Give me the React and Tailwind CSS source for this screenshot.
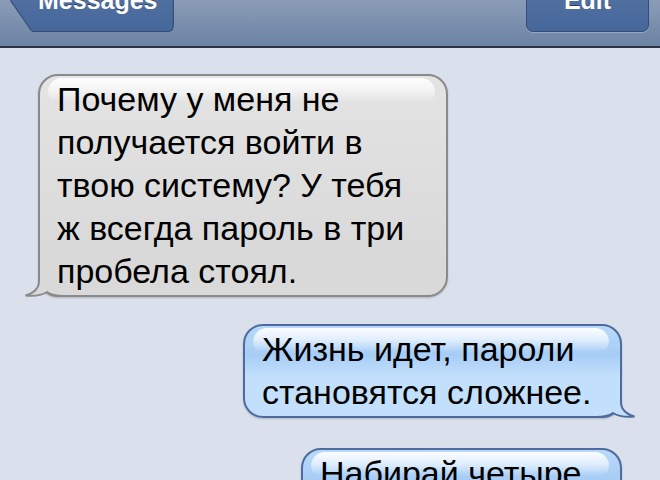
const FONT = "font-['Liberation_Sans',Arial,sans-serif]"

const TAIL_EDGE = 'M15,4 L15,22 C15,30 10,34 1.5,36.5 C10,37.5 18,36 23,33 C27,36 32,37 40,37'

// отступы считаются от внутреннего края рамки (2px), поэтому -16/-4
function Tail({ fill, stroke, right }) {
  return (
    <svg
      viewBox="0 0 40 40"
      className={
        right
          ? 'absolute right-[-16px] bottom-[-4px] w-[40px] h-[40px] -scale-x-100'
          : 'absolute left-[-16px] bottom-[-4px] w-[40px] h-[40px]'
      }
    >
      <path d={`${TAIL_EDGE} L40,4 Z`} fill={fill} />
      <path d={TAIL_EDGE} fill="none" stroke={stroke} strokeWidth="2" />
    </svg>
  )
}

function Bubble({ mine, className, children }) {
  // нижние 40px фона ровного цвета, чтобы хвостик сливался с пузырём
  const skin = mine
    ? 'border-[#4d6c9d] bg-[linear-gradient(#b9d9f9,#a7cdf6_32%,#c2dffb_calc(100%_-_40px))]'
    : 'border-[#8a8a8a] bg-[linear-gradient(#e4e4e4,#d9d9d9_calc(100%_-_40px))]'
  return (
    <div
      className={`relative rounded-[20px] border-2 pt-[2px] pb-[2px] pl-[17px] shadow-[0_1px_2px_rgba(0,0,0,0.2)] ${skin} ${className}`}
    >
      <div className="absolute top-[2px] left-[8px] right-[11px] h-[24px] rounded-t-[17px] rounded-b-[12px] bg-linear-to-b from-white/95 via-white/60 to-white/0" />
      {mine ? (
        <Tail fill="#c2dffb" stroke="#4d6c9d" right />
      ) : (
        <Tail fill="#d9d9d9" stroke="#8a8a8a" />
      )}
      <p className="relative text-[34px] leading-[43px] text-black whitespace-nowrap">{children}</p>
    </div>
  )
}

function BackButton() {
  return (
    <div className="relative w-[164px] h-[62px] -mt-[30px] ml-[10px] flex items-center pl-[28px]">
      <svg viewBox="0 0 164 62" className="absolute inset-0 w-[164px] h-[62px]">
        <defs>
          <linearGradient id="back" x1="0" y1="0" x2="0" y2="1">
            <stop offset="0" stopColor="#5877a7" />
            <stop offset="1" stopColor="#46679a" />
          </linearGradient>
        </defs>
        <path
          d="M0.8,31 L21,60 Q22,61.5 24,61.5 L157,61.5 Q163.3,61.5 163.3,55 L163.3,7 Q163.3,0.5 157,0.5 L24,0.5 Q22,0.5 21,2 Z"
          fill="url(#back)"
          stroke="#334d76"
          strokeWidth="1.2"
        />
      </svg>
      <span className="relative text-[25px] font-bold text-white [text-shadow:0_-1px_0_rgba(0,0,0,0.45)]">
        Messages
      </span>
    </div>
  )
}

export default function App() {
  return (
    <div className={`w-[660px] h-[480px] overflow-hidden bg-[#dbe1ec] ${FONT}`}>
      {/* навбар */}
      <div className="h-[48px] flex justify-between items-start overflow-hidden bg-linear-to-b from-[#8b9cb7] to-[#6c83a4] border-b-2 border-[#2a3445]">
        <BackButton />
        <div className="w-[123px] h-[62px] -mt-[30px] mr-[11px] flex items-center justify-center rounded-[7px] border border-[#334d76] bg-linear-to-b from-[#5877a7] to-[#46679a] shadow-[0_1px_0_rgba(255,255,255,0.25)]">
          <span className="text-[25px] font-bold text-white [text-shadow:0_-1px_0_rgba(0,0,0,0.45)]">Edit</span>
        </div>
      </div>

      {/* переписка */}
      <div className="flex flex-col pt-[26px] px-[38px]">
        <Bubble className="self-start w-[410px]">
          Почему у меня не<br />
          получается войти в<br />
          твою систему? У тебя<br />
          ж всегда пароль в три<br />
          пробела стоял.
        </Bubble>
        <Bubble mine className="self-end w-[379px] mt-[27px]">
          Жизнь идет, пароли<br />
          становятся сложнее.
        </Bubble>
        <Bubble mine className="self-end w-[321px] mt-[30px]">
          Набирай четыре<br />
          пробела.
        </Bubble>
      </div>
    </div>
  )
}
